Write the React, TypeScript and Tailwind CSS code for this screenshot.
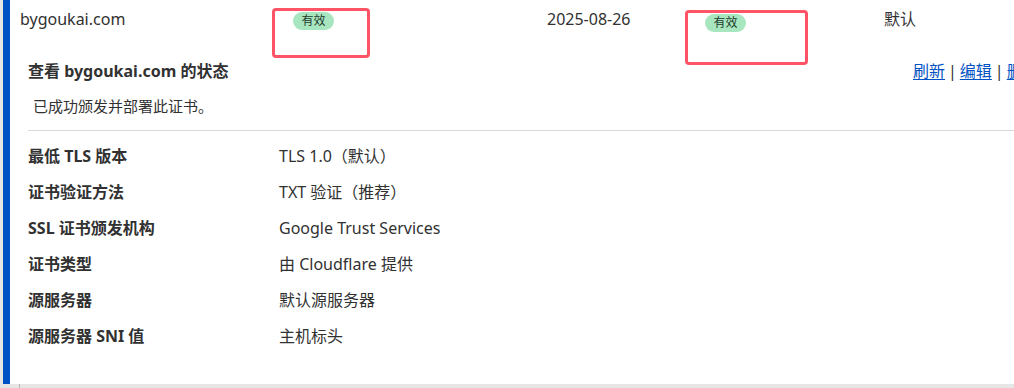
import React from "react";

const rows: [string, string][] = [
  ["最低 TLS 版本", "TLS 1.0（默认）"],
  ["证书验证方法", "TXT 验证（推荐）"],
  ["SSL 证书颁发机构", "Google Trust Services"],
  ["证书类型", "由 Cloudflare 提供"],
  ["源服务器", "默认源服务器"],
  ["源服务器 SNI 值", "主机标头"],
];

function Badge() {
  return (
    <span className="flex h-[18px] w-[41px] items-center justify-center rounded-full bg-[#a8e6c0] text-[12px] leading-none text-[#1f3a2b]">
      有效
    </span>
  );
}

export default function App() {
  return (
    <div
      className="relative h-[388px] w-[1014px] overflow-hidden bg-[#e6e6e6] text-[#313131]"
      style={{ fontFamily: '"Noto Sans", "Noto Sans CJK SC", sans-serif' }}
    >
      <div className="flex h-[384px] pl-[3px]">
        <div className="w-[7px] shrink-0 bg-[#0051c3]" />
        <div className="flex-1 bg-white">
          {/* top row */}
          <div className="grid h-[40px] grid-cols-[273px_254px_158px_179px_1fr] items-start pl-[10px] pt-[8px] text-[16px]">
            <div className="leading-[22px]">bygoukai.com</div>
            <div className="flex pt-[4px]">
              <Badge />
            </div>
            <div className="leading-[22px]">2025-08-26</div>
            <div className="flex pt-[6px]">
              <Badge />
            </div>
            <div className="leading-[22px]">默认</div>
          </div>

          {/* details */}
          <div className="pl-[18px]">
            <div className="mt-[20px] flex items-center justify-between">
              <div className="text-[16px] font-bold leading-[22px]">查看 bygoukai.com 的状态</div>
              <div className="flex w-[101px] shrink-0 items-center gap-[3px] whitespace-nowrap text-[16px] leading-[22px]">
                <a className="text-[#0051c3] underline underline-offset-2">刷新</a>
                <span>|</span>
                <a className="text-[#0051c3] underline underline-offset-2">编辑</a>
                <span>|</span>
                <a className="text-[#0051c3] underline underline-offset-2">删除</a>
              </div>
            </div>
            <div className="mt-[14px] pl-[5px] text-[15px] leading-[20px]">已成功颁发并部署此证书。</div>
            <div className="mt-[14px] h-px bg-[#d9d9d9]" />
            <div className="mt-[14px] flex flex-col">
              {rows.map(([k, v]) => (
                <div key={k} className="flex h-[36px] items-start text-[16px] leading-[22px]">
                  <div className="w-[251px] shrink-0 font-bold">{k}</div>
                  <div>{v}</div>
                </div>
              ))}
            </div>
          </div>
        </div>
      </div>
      <div className="flex h-[4px] pl-[19px]">
        <div className="h-full w-px bg-[#b5b5b5]" />
      </div>

      {/* annotation boxes */}
      <div className="absolute left-[272px] top-[8px] h-[50px] w-[98px] rounded-[4px] border-[3px] border-[#ff5466]" />
      <div className="absolute left-[685px] top-[10px] h-[55px] w-[123px] rounded-[4px] border-[3px] border-[#ff5466]" />
    </div>
  );
}
